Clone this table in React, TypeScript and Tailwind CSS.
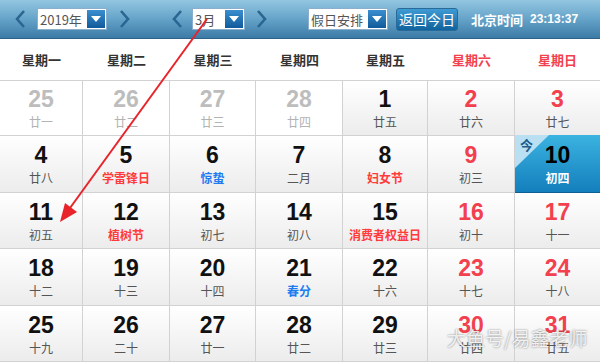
import React from 'react';

type Day = {
  n: number;
  sub: string;
  kind?: 'prev' | 'holiday' | 'term';
  red?: boolean;
  today?: boolean;
};

const weekdays = ['星期一', '星期二', '星期三', '星期四', '星期五', '星期六', '星期日'];

const rows: Day[][] = [
  [
    { n: 25, sub: '廿一', kind: 'prev' },
    { n: 26, sub: '廿二', kind: 'prev' },
    { n: 27, sub: '廿三', kind: 'prev' },
    { n: 28, sub: '廿四', kind: 'prev' },
    { n: 1, sub: '廿五' },
    { n: 2, sub: '廿六', red: true },
    { n: 3, sub: '廿七', red: true },
  ],
  [
    { n: 4, sub: '廿八' },
    { n: 5, sub: '学雷锋日', kind: 'holiday' },
    { n: 6, sub: '惊蛰', kind: 'term' },
    { n: 7, sub: '二月' },
    { n: 8, sub: '妇女节', kind: 'holiday' },
    { n: 9, sub: '初三', red: true },
    { n: 10, sub: '初四', today: true },
  ],
  [
    { n: 11, sub: '初五' },
    { n: 12, sub: '植树节', kind: 'holiday' },
    { n: 13, sub: '初七' },
    { n: 14, sub: '初八' },
    { n: 15, sub: '消费者权益日', kind: 'holiday' },
    { n: 16, sub: '初十', red: true },
    { n: 17, sub: '十一', red: true },
  ],
  [
    { n: 18, sub: '十二' },
    { n: 19, sub: '十三' },
    { n: 20, sub: '十四' },
    { n: 21, sub: '春分', kind: 'term' },
    { n: 22, sub: '十六' },
    { n: 23, sub: '十七', red: true },
    { n: 24, sub: '十八', red: true },
  ],
  [
    { n: 25, sub: '十九' },
    { n: 26, sub: '二十' },
    { n: 27, sub: '廿一' },
    { n: 28, sub: '廿二' },
    { n: 29, sub: '廿三' },
    { n: 30, sub: '廿四', red: true },
    { n: 31, sub: '廿五', red: true },
  ],
];

const rowHeights = ['h-[55px]', 'h-[57px]', 'h-[56px]', 'h-[57px]', 'h-[56px]'];

const Chevron = ({ dir }: { dir: 'left' | 'right' }) => (
  <svg width="12" height="20" viewBox="0 0 12 20" className="shrink-0">
    <polyline
      points={dir === 'left' ? '10,2 3,10 10,18' : '2,2 9,10 2,18'}
      fill="none"
      stroke="#2b6592"
      strokeWidth="2.6"
    />
  </svg>
);

const ArrowBtn = () => (
  <div className="w-[18px] h-[18px] bg-gradient-to-b from-[#3a8fd0] to-[#0f5a9a] flex items-center justify-center">
    <svg width="10" height="6" viewBox="0 0 10 6">
      <polygon points="0,0 10,0 5,6" fill="#fff" />
    </svg>
  </div>
);

const Select = ({ label, width }: { label: string; width: string }) => (
  <div className={`${width} h-[22px] bg-white border border-[#8aaecb] flex items-center justify-between pl-[2px] pr-[1px]`}>
    <span className="text-[13px] text-[#555] leading-none">{label}</span>
    <ArrowBtn />
  </div>
);

const Cell = ({ d, col }: { d: Day; col: number }) => {
  const last = col === 6;
  if (d.today) {
    return (
      <div className="relative -mt-px flex flex-col items-center justify-center bg-gradient-to-b from-[#3ab3e0] to-[#137fbd] border-b border-[#0f5f94]">
        <svg width="34" height="33" viewBox="0 0 34 33" className="absolute left-0 top-0">
          <polygon points="0,0 34,0 0,33" fill="#b9e0f2" />
        </svg>
        <span className="absolute left-[5px] top-[3px] text-[13px] font-bold text-[#1d5c8c] leading-none">今</span>
        <span className="text-[23px] font-bold text-black leading-none font-['Liberation_Sans',sans-serif]">{d.n}</span>
        <span className="mt-[5px] text-[12px] font-bold text-white leading-none">{d.sub}</span>
      </div>
    );
  }
  const prev = d.kind === 'prev';
  const numColor = prev ? 'text-[#bdbdbd]' : d.red ? 'text-[#f2404e]' : 'text-[#111]';
  const subColor = prev
    ? 'text-[#b3b3b3]'
    : d.kind === 'holiday'
    ? 'text-[#ff3b3b] font-bold'
    : d.kind === 'term'
    ? 'text-[#1d7cf0] font-bold'
    : 'text-[#555]';
  return (
    <div
      className={`flex flex-col items-center justify-center border-b border-[#d2d2d2] ${last ? '' : 'border-r'} ${
        prev ? 'bg-white' : 'bg-gradient-to-b from-white to-[#ececec]'
      }`}
    >
      <span className={`text-[23px] font-bold leading-none font-['Liberation_Sans',sans-serif] ${numColor}`}>{d.n}</span>
      <span className={`mt-[5px] text-[12px] leading-none ${subColor}`}>{d.sub}</span>
    </div>
  );
};

export default function App() {
  return (
    <div className="relative w-[600px] h-[362px] overflow-hidden bg-white font-['Noto_Sans_CJK_SC','Noto_Sans',sans-serif]">
      {/* top bar */}
      <div className="h-[39px] bg-gradient-to-b from-[#93c6e0] via-[#65a3c9] to-[#3c7ba6] border-b border-[#2d6389] flex items-center pl-[14px]">
        <Chevron dir="left" />
        <div className="ml-[11px]">
          <Select label="2019年" width="w-[70px]" />
        </div>
        <div className="ml-[12px]">
          <Chevron dir="right" />
        </div>
        <div className="ml-[40px]">
          <Chevron dir="left" />
        </div>
        <div className="ml-[9px]">
          <Select label="3月" width="w-[53px]" />
        </div>
        <div className="ml-[11px]">
          <Chevron dir="right" />
        </div>
        <div className="ml-[40px]">
          <Select label="假日安排" width="w-[80px]" />
        </div>
        <div className="ml-[8px] h-[23px] w-[62px] rounded-[3px] bg-gradient-to-b from-[#3f9bd3] to-[#0f639e] border border-[#2a6a98] flex items-center justify-center text-[14px] text-white leading-none">
          返回今日
        </div>
        <div className="ml-[13px] flex items-center gap-[7px] text-white font-bold text-[13px] leading-none">
          <span>北京时间</span>
          <span className="font-['Liberation_Sans',sans-serif] text-[12px]">23:13:37</span>
        </div>
      </div>

      {/* weekday header */}
      <div className="grid grid-cols-[83px_87px_86px_87px_85px_87px_85px] h-[42px] border-b border-[#d2d2d2]">
        {weekdays.map((w, i) => (
          <div
            key={w}
            className={`flex items-center justify-center text-[13px] font-bold ${i >= 5 ? 'text-[#f2404e]' : 'text-[#333]'}`}
          >
            {w}
          </div>
        ))}
      </div>

      {/* days */}
      {rows.map((r, ri) => (
        <div key={ri} className={`grid grid-cols-[83px_87px_86px_87px_85px_87px_85px] ${rowHeights[ri]}`}>
          {r.map((d, ci) => (
            <Cell key={ci} d={d} col={ci} />
          ))}
        </div>
      ))}

      {/* red annotation arrow */}
      <svg className="absolute left-0 top-0 pointer-events-none" width="600" height="362">
        <line x1="207" y1="19" x2="70" y2="208" stroke="#e8232a" strokeWidth="2" />
        <polygon points="60,222 77,212 65,203" fill="#e8232a" />
      </svg>

      {/* watermark */}
      <div className="absolute left-[447px] top-[328px] text-[19px] text-white/85 leading-none [text-shadow:0_0_2px_rgba(0,0,0,0.55)]">
        大鱼号/易鑫老师
      </div>
    </div>
  );
}
